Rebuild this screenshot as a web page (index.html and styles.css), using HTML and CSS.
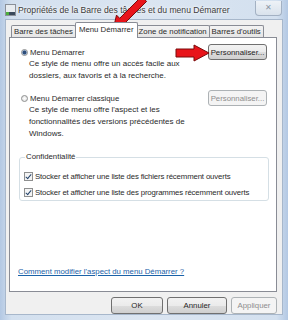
FILE: index.html
```html
<html>
  <head>
    <title>Propriétés de la Barre des tâches et du menu Démarrer</title>
    <link rel="stylesheet" href="styles.css">
  </head>
  <body>
    <div class="window">
      <header class="titlebar">
        <svg class="app-icon" width="11" height="12" viewBox="0 0 11 12">
          <rect x="0.5" y="0.5" width="10" height="11" fill="#e8ecf0" stroke="#8a9099" />
          <rect x="1" y="8" width="9" height="3" fill="#3b4a5c" />
          <rect x="1" y="8" width="3" height="3" fill="#4caf3c" />
        </svg>
        <span class="title">Propriétés de la Barre des tâches et du menu Démarrer</span>
        <span class="close">✕</span>
      </header>

      <div class="client">
        <nav class="tabs">
          <span class="tab">Barre des tâches</span>
          <span class="tab tab-active">Menu Démarrer</span>
          <span class="tab">Zone de notification</span>
          <span class="tab">Barres d'outils</span>
        </nav>

        <section class="panel">
          <div class="option">
            <div class="option-text">
              <label class="radio-row">
                <span class="radio radio-on"></span>
                Menu Démarrer
              </label>
              <p class="desc">
                Ce style de menu offre un accès facile aux<br />
                dossiers, aux favoris et à la recherche.
              </p>
            </div>
            <button class="btn btn-small">Personnaliser...</button>
          </div>

          <div class="option option-second">
            <div class="option-text">
              <label class="radio-row">
                <span class="radio"></span>
                Menu Démarrer classique
              </label>
              <p class="desc">
                Ce style de menu offre l'aspect et les<br />
                fonctionnalités des versions précédentes de<br />
                Windows.
              </p>
            </div>
            <button class="btn btn-small" disabled>Personnaliser...</button>
          </div>

          <fieldset class="group">
            <legend>Confidentialité</legend>
            <label class="check-row">
              <span class="check"></span>
              Stocker et afficher une liste des fichiers récemment ouverts
            </label>
            <label class="check-row">
              <span class="check"></span>
              Stocker et afficher une liste des programmes récemment ouverts
            </label>
          </fieldset>

          <a class="help-link" href="#">Comment modifier l'aspect du menu Démarrer ?</a>
        </section>

        <footer class="buttons">
          <button class="btn btn-ok">OK</button>
          <button class="btn btn-cancel">Annuler</button>
          <button class="btn btn-apply" disabled>Appliquer</button>
        </footer>
      </div>

      <!-- red arrows drawn over the dialog -->
      <svg class="arrow arrow-tab" width="40" height="34" viewBox="0 0 40 34">
        <path d="M5 30 L8.5 15.1 L11.7 18.3 L33.6 -3.6 L38.6 1.4 L16.7 23.3 L19.9 26.5 Z" fill="#e8141a" stroke="#7a0a0a" stroke-width="1" stroke-linejoin="round" />
      </svg>
      <svg class="arrow arrow-btn" width="36" height="18" viewBox="0 0 36 18">
        <path d="M1 5 L19 5 L19 1 L34 9 L19 17 L19 13 L1 13 Z" fill="#e8141a" stroke="#7a0a0a" stroke-width="1" stroke-linejoin="round" />
      </svg>
    </div>
  </body>
</html>
```

FILE: styles.css
```css
* {
  box-sizing: border-box;
  margin: 0;
  padding: 0;
}

body {
  width: 288px;
  height: 320px;
  overflow: hidden;
  font-family: "Liberation Sans", Arial, sans-serif;
  font-size: 7.8px;
  color: #2a2a2a;
}

.window {
  position: relative;
  height: 320px;
  display: flex;
  flex-direction: column;
  padding: 0 5px 5px 5px;
  background: linear-gradient(90deg, #b3c8e3 0%, #d3e0ef 4%, #dbe5f1 50%, #d3e0ef 96%, #b3c8e3 100%);
}

.titlebar {
  height: 20px;
  display: flex;
  align-items: center;
}

.app-icon {
  margin-right: 2px;
}

.title {
  font-size: 8.6px;
  color: #3a3a3a;
  text-shadow: 0 0 4px #ffffff, 0 0 2px #ffffff;
}

.close {
  margin-left: auto;
  margin-right: 1px;
  width: 27px;
  height: 15px;
  margin-top: -3px;
  border: 1px solid #a3b1c3;
  border-top: none;
  border-radius: 0 0 4px 4px;
  background: linear-gradient(#eef2f7, #d9e2ec);
  color: #8b97a4;
  font-size: 8px;
  text-align: center;
  line-height: 14px;
}

.client {
  flex: 1;
  display: flex;
  flex-direction: column;
  background: #f0f0f0;
  border: 1px solid #a7b7cb;
  padding: 2px 5px 0 3px;
}

.tabs {
  display: flex;
  align-items: flex-end;
  height: 15px;
  padding-left: 2px;
  position: relative;
  z-index: 1;
}

.tab {
  height: 12px;
  line-height: 11px;
  padding: 0 2px;
  border: 1px solid #898c95;
  border-bottom: none;
  border-radius: 2px 2px 0 0;
  background: linear-gradient(#f3f3f3, #e5e5e5);
  white-space: nowrap;
  font-size: 7.8px;
}

.tab + .tab {
  margin-left: -1px;
}

.tab-active {
  height: 16px;
  line-height: 14px;
  margin: 0 -1px -1px -1px;
  padding: 0 3px;
  background: #ffffff;
  position: relative;
  z-index: 2;
}

.panel {
  height: 255px;
  display: flex;
  flex-direction: column;
  background: #ffffff;
  border: 1px solid #898c95;
  padding: 6px 9px 13px 10px;
}

.option {
  display: flex;
  justify-content: space-between;
  align-items: flex-start;
}

.option-second {
  margin-top: 8px;
}

.radio-row,
.check-row {
  display: flex;
  align-items: center;
  height: 16px;
  white-space: nowrap;
}

.radio {
  width: 7px;
  height: 7px;
  border-radius: 50%;
  border: 1px solid #8e8f8f;
  background: radial-gradient(#ffffff, #dcdcdc);
  margin: 0 2px 0 1px;
}

.radio-on {
  background: radial-gradient(circle, #2d4d7a 0 1.6px, #9fb8d8 2.2px, #f4f4f4 3px);
}

.desc {
  margin-top: -2px;
  padding-left: 9px;
  line-height: 12px;
  font-size: 8px;
}

.btn {
  font-family: "Liberation Sans", Arial, sans-serif;
  font-size: 7.8px;
  color: #1e1e1e;
  height: 17px;
  border: 1px solid #707070;
  border-radius: 3px;
  background: linear-gradient(#f2f2f2 0%, #ebebeb 50%, #dddddd 51%, #cfcfcf 100%);
}

.btn-small {
  width: 59px;
  height: 16px;
}

.btn:disabled {
  color: #8d8d8d;
  border-color: #adb2b5;
  background: #f4f4f4;
}

.group {
  margin: 11px -2px 0 -1px;
  border: 1px solid #d5dfe5;
  border-radius: 3px;
  padding: 1px 0 1px 4px;
}

.group legend {
  line-height: 12px;
  padding: 0 1px;
  margin-left: 1px;
}

.check-row {
  height: 14px;
  margin-top: 2px;
  letter-spacing: -0.15px;
}

.check-row:first-of-type {
  margin-top: 5px;
}

.check {
  width: 9px;
  height: 9px;
  border: 1px solid #8e8f8f;
  margin-right: 2px;
  background: #f4f4f4;
  position: relative;
}

.check::after {
  content: "";
  position: absolute;
  left: 2px;
  top: 0px;
  width: 2px;
  height: 5px;
  border: solid #24446b;
  border-width: 0 1.5px 1.5px 0;
  transform: rotate(40deg);
}

.help-link {
  margin-top: auto;
  margin-left: -2px;
  line-height: 12px;
  color: #1b62a8;
  text-decoration: underline;
}

.buttons {
  display: flex;
  justify-content: flex-end;
  gap: 4px;
  padding: 5px 0 0 0;
}

.btn-ok {
  width: 52px;
}

.btn-cancel {
  width: 60px;
}

.btn-apply {
  width: 46px;
}

.arrow {
  position: absolute;
  overflow: visible;
}

.arrow-tab {
  left: 108px;
  top: 0;
}

.arrow-btn {
  left: 175px;
  top: 44px;
}
```
